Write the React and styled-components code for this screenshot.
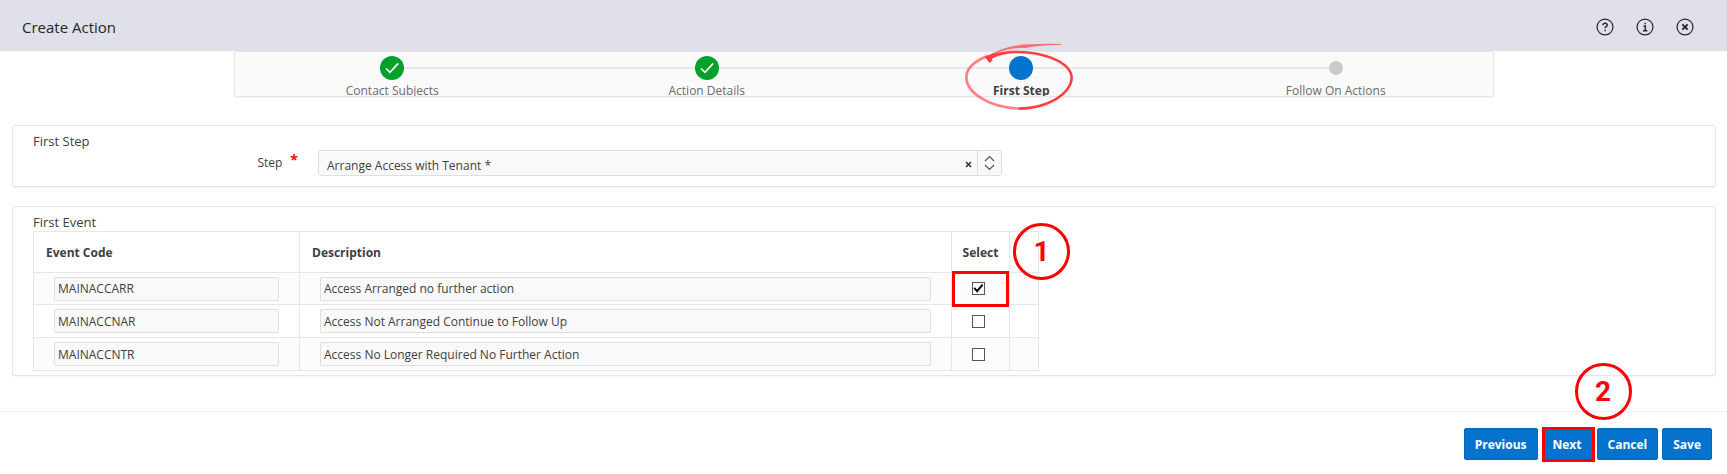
import React from 'react';
import styled, { createGlobalStyle } from 'styled-components';

const GlobalStyle = createGlobalStyle`
  * {
    box-sizing: border-box;
  }

  body {
    margin: 0;
    background: #fff;
    color: #404040;
    font-family: 'Open Sans', 'Noto Sans', sans-serif;
    font-size: 12px;
    line-height: 16px;
  }

  button, input {
    font: inherit;
    color: inherit;
  }
`;

const Header = styled.header`
  display: flex;
  align-items: center;
  justify-content: space-between;
  height: 51px;
  padding: 2px 33px 0 22px;
  background: #e0e0ea;
`;

const Title = styled.h1`
  margin: 0;
  font-size: 15px;
  line-height: 20px;
  font-weight: 400;
  color: #262626;
`;

const HeaderActions = styled.div`
  display: flex;
  gap: 22px;
`;

const IconButton = styled.button`
  display: flex;
  padding: 0;
  border: 0;
  background: none;
  color: #262626;
  cursor: pointer;
`;

const Steps = styled.ol`
  display: grid;
  grid-template-columns: repeat(4, 1fr);
  height: 46px;
  margin: 0 233px 28px 234px;
  padding: 4px 0 0;
  list-style: none;
  background: #fafafa;
  border: 1px solid #e6e6e6;
  border-radius: 2px;
  box-shadow: 0 1px 1px #f2f2f2;
`;

const StepItem = styled.li`
  position: relative;
  display: flex;
  flex-direction: column;
  align-items: center;
`;

const Track = styled.div`
  display: flex;
  align-items: center;
  width: 100%;
  height: 24px;
`;

const Line = styled.span`
  flex: 1;
  height: 2px;
  background: ${props => (props.$hidden ? 'transparent' : '#e6e6e6')};
`;

const markerColors = { done: '#00a12b', current: '#0572ce', todo: '#cacaca' };

const Marker = styled.span`
  display: flex;
  align-items: center;
  justify-content: center;
  width: ${props => (props.$state === 'todo' ? '14px' : '24px')};
  height: ${props => (props.$state === 'todo' ? '14px' : '24px')};
  border-radius: 50%;
  background: ${props => markerColors[props.$state]};
`;

const StepLabel = styled.span`
  height: 16px;
  overflow: hidden;
  line-height: 22px;
  font-weight: ${props => (props.$current ? 700 : 400)};
  color: ${props => (props.$current ? '#404040' : '#6b6b6b')};
`;

const Sketch = styled.svg`
  position: absolute;
  top: -21px;
  left: calc(50% - 91px);
  overflow: visible;
  pointer-events: none;
`;

const Main = styled.main`
  display: flex;
  flex-direction: column;
  gap: 19px;
  padding: 0 11px 0 12px;
`;

const Panel = styled.section`
  padding: 6px 20px ${props => (props.$flush ? '4px' : '10px')};
  border: 1px solid #e6e6e6;
  border-radius: 2px;
  box-shadow: 0 1px 1px #f7f7f7;
`;

const PanelTitle = styled.h2`
  margin: 0;
  font-size: 13px;
  line-height: 18px;
  font-weight: 400;
`;

const Field = styled.div`
  display: flex;
  align-items: flex-start;
  max-width: 969px;
`;

const FieldLabel = styled.label`
  display: flex;
  justify-content: flex-end;
  gap: 8px;
  width: 285px;
  padding: 5px 20px 0 0;
`;

const Required = styled.span`
  font-size: 14px;
  line-height: 10px;
  font-weight: 700;
  color: #ff0000;
`;

const Combo = styled.div`
  display: flex;
  flex: 1;
  height: 26px;
  background: #f9f9f9;
  border: 1px solid #dfdfdf;
  border-radius: 3px;
`;

const ComboInput = styled.input`
  flex: 1;
  min-width: 0;
  padding: 5px 8px 0;
  border: 0;
  background: none;
`;

const ClearButton = styled(IconButton)`
  align-items: center;
  padding: 3px 5px 0;
`;

const OpenButton = styled(IconButton)`
  align-items: center;
  justify-content: center;
  width: 24px;
  border-left: 1px solid #dfdfdf;
`;

const Table = styled.table`
  width: 1006px;
  table-layout: fixed;
  border-collapse: collapse;
`;

const Th = styled.th`
  width: ${props => props.$width};
  height: 41px;
  padding: 2px ${props => (props.$tight ? '0' : '12px')} 0;
  border: 1px solid #e6e6e6;
  text-align: ${props => (props.$tight ? 'center' : 'left')};
  font-weight: 700;
`;

const EndTd = styled.td`
  position: relative;
  width: 29px;
  padding: 0;
  border: 1px solid #e6e6e6;
`;

const Row = styled.tr`
  height: 33px;

  &:first-child {
    height: 32px;
  }

  &:nth-child(odd) {
    background: #fcfcfc;
  }
`;

const Td = styled.td`
  position: relative;
  padding: 0 20px;
  border: 1px solid #e6e6e6;
`;

const CheckTd = styled(Td)`
  padding: 0 4px 0 0;
`;

const CellInput = styled.input`
  display: block;
  width: 100%;
  height: 24px;
  padding: 0 3px;
  background: #f9f9f9;
  border: 1px solid #dfdfdf;
  border-radius: 2px;
`;

const CheckBox = styled.span`
  position: relative;
  display: block;
  width: 13px;
  height: 13px;
  margin: 0 auto;
`;

const CheckInput = styled.input`
  display: block;
  appearance: none;
  width: 13px;
  height: 13px;
  margin: 0;
  border: 1px solid #555;
  background: #fff;

  &:not(:checked) + svg {
    display: none;
  }
`;

const CheckMark = styled.svg`
  position: absolute;
  top: 0;
  left: 0;
  pointer-events: none;
`;

const Outline = styled.span`
  position: absolute;
  inset: ${props => props.$inset};
  border: 3px solid #ff0000;
  pointer-events: none;
`;

const Badge = styled.span`
  position: absolute;
  top: ${props => props.$top};
  left: ${props => props.$left};
  z-index: 1;
  display: flex;
  align-items: center;
  justify-content: center;
  width: 57px;
  height: 57px;
  border: 3px solid #ff0000;
  border-radius: 50%;
  color: #ff0000;
  font-family: Roboto, 'Liberation Sans', sans-serif;
  font-size: 28px;
  line-height: 28px;
  font-weight: 700;
  pointer-events: none;
`;

const Footer = styled.footer`
  display: flex;
  justify-content: flex-end;
  gap: 4px;
  margin-top: 35px;
  padding: 16px 15px 14px;
  border-top: 1px solid #f0f0f0;
`;

const ButtonSlot = styled.div`
  position: relative;
`;

const Button = styled.button`
  display: block;
  height: 32px;
  padding: 1px 10px 0;
  border: 1px solid #0568bb;
  border-radius: 2px;
  background: #0572ce;
  color: #fff;
  font-weight: 700;
  cursor: pointer;
`;

const steps = [
  { label: 'Contact Subjects', state: 'done' },
  { label: 'Action Details', state: 'done' },
  { label: 'First Step', state: 'current' },
  { label: 'Follow On Actions', state: 'todo' },
];

const events = [
  { code: 'MAINACCARR', description: 'Access Arranged no further action', selected: true },
  { code: 'MAINACCNAR', description: 'Access Not Arranged Continue to Follow Up' },
  { code: 'MAINACCNTR', description: 'Access No Longer Required No Further Action' },
];

const iconPaths = {
  Help: 'M6.5 6.8c0-1.2.9-1.9 2-1.9s2.1.7 2.1 1.8c0 1.5-2 1.5-2 3M8.6 11.1v1.3',
  About: 'M7 7.5h1.8v4.2M6.6 12h4.2M8.7 4.6v1.4',
  Close: 'M6 6l5 5M11 6l-5 5',
};

const HeaderIcon = ({ name }) => (
  <IconButton type="button" aria-label={name}>
    <svg width="18" height="18" viewBox="0 0 17 17" fill="none" stroke="currentColor">
      <circle cx="8.5" cy="8.5" r="7.5" strokeWidth="1.1" />
      <path d={iconPaths[name]} strokeWidth={name === 'Close' ? 1.8 : 1.4} />
    </svg>
  </IconButton>
);

const HandCircle = () => (
  <Sketch width="180" height="76" viewBox="0 0 540 228" aria-hidden="true">
    <path
      d="M267 221C178 217 109 174 109 127C109 98 136 77 174 62"
      fill="none"
      stroke="#ff4040"
      strokeOpacity="0.65"
      strokeWidth="8"
    />
    <path
      d="M166 66C205 42 250 28 300 28C330 26 360 26 393 27V30C360 30 330 32 302 36L288 39C250 37 210 47 168 69Z"
      fill="#ff4040"
      fillOpacity="0.7"
    />
    <path
      d="M165 65C190 54 220 47 260 47C350 47 429 82 429 127C429 178 356 225 267 225V217C352 216 421 174 421 127C421 88 345 55 262 55C232 55 205 61 185 72L188 76L179 84L167 70Z"
      fill="#ff4040"
    />
  </Sketch>
);

const Wizard = () => (
  <Steps>
    {steps.map((step, i) => (
      <StepItem key={step.label}>
        <Track>
          <Line $hidden={i === 0} />
          <Marker $state={step.state}>
            {step.state === 'done' && (
              <svg width="16" height="16" viewBox="0 0 16 16" fill="none" stroke="#fff" strokeWidth="1.6">
                <path d="M2 8.5l4 3.8L14.2 3.4" />
              </svg>
            )}
          </Marker>
          <Line $hidden={i === steps.length - 1} />
        </Track>
        <StepLabel $current={step.state === 'current'}>{step.label}</StepLabel>
        {step.state === 'current' && <HandCircle />}
      </StepItem>
    ))}
  </Steps>
);

const EventTable = () => (
  <Table>
    <thead>
      <tr>
        <Th $width="266px">Event Code</Th>
        <Th>Description</Th>
        <Th $width="58px" $tight>Select</Th>
        <EndTd>
          <Badge $top="-9px" $left="3px">1</Badge>
        </EndTd>
      </tr>
    </thead>
    <tbody>
      {events.map(event => (
        <Row key={event.code}>
          <Td>
            <CellInput aria-label="Event Code" defaultValue={event.code} readOnly />
          </Td>
          <Td>
            <CellInput aria-label="Description" defaultValue={event.description} readOnly />
          </Td>
          <CheckTd>
            <CheckBox>
              <CheckInput type="checkbox" aria-label={`Select ${event.code}`} defaultChecked={event.selected} />
              <CheckMark width="13" height="13" viewBox="0 0 13 13">
                <path d="M2.2 5.8l2.9 3.4L10.6 2.6" fill="none" stroke="#000" strokeWidth="2" />
              </CheckMark>
            </CheckBox>
            {event.selected && <Outline $inset="-2px 0 -3px 0" />}
          </CheckTd>
          <EndTd />
        </Row>
      ))}
    </tbody>
  </Table>
);

const App = () => {
  return (
    <>
      <GlobalStyle />
      <Header>
        <Title>Create Action</Title>
        <HeaderActions>
          <HeaderIcon name="Help" />
          <HeaderIcon name="About" />
          <HeaderIcon name="Close" />
        </HeaderActions>
      </Header>
      <Wizard />
      <Main>
        <Panel>
          <PanelTitle>First Step</PanelTitle>
          <Field>
            <FieldLabel htmlFor="step">
              Step <Required>*</Required>
            </FieldLabel>
            <Combo>
              <ComboInput id="step" defaultValue="Arrange Access with Tenant *" />
              <ClearButton type="button" aria-label="Clear">
                <svg width="7" height="7" viewBox="0 0 7 7" stroke="#333" strokeWidth="1.6">
                  <path d="M1 1l5 5M6 1L1 6" />
                </svg>
              </ClearButton>
              <OpenButton type="button" aria-label="Open list">
                <svg width="11" height="16" viewBox="0 0 11 16" fill="none" stroke="#555" strokeWidth="1.2">
                  <path d="M1 6l4.5-4.5L10 6M1 10l4.5 4.5L10 10" />
                </svg>
              </OpenButton>
            </Combo>
          </Field>
        </Panel>
        <Panel $flush>
          <PanelTitle>First Event</PanelTitle>
          <EventTable />
        </Panel>
      </Main>
      <Footer>
        <Button type="button">Previous</Button>
        <ButtonSlot>
          <Button type="button">Next</Button>
          <Outline $inset="-1px -2px -2px 0" />
          <Badge $top="-65px" $left="33px">2</Badge>
        </ButtonSlot>
        <Button type="button">Cancel</Button>
        <Button type="button">Save</Button>
      </Footer>
    </>
  );
};

export default App;
